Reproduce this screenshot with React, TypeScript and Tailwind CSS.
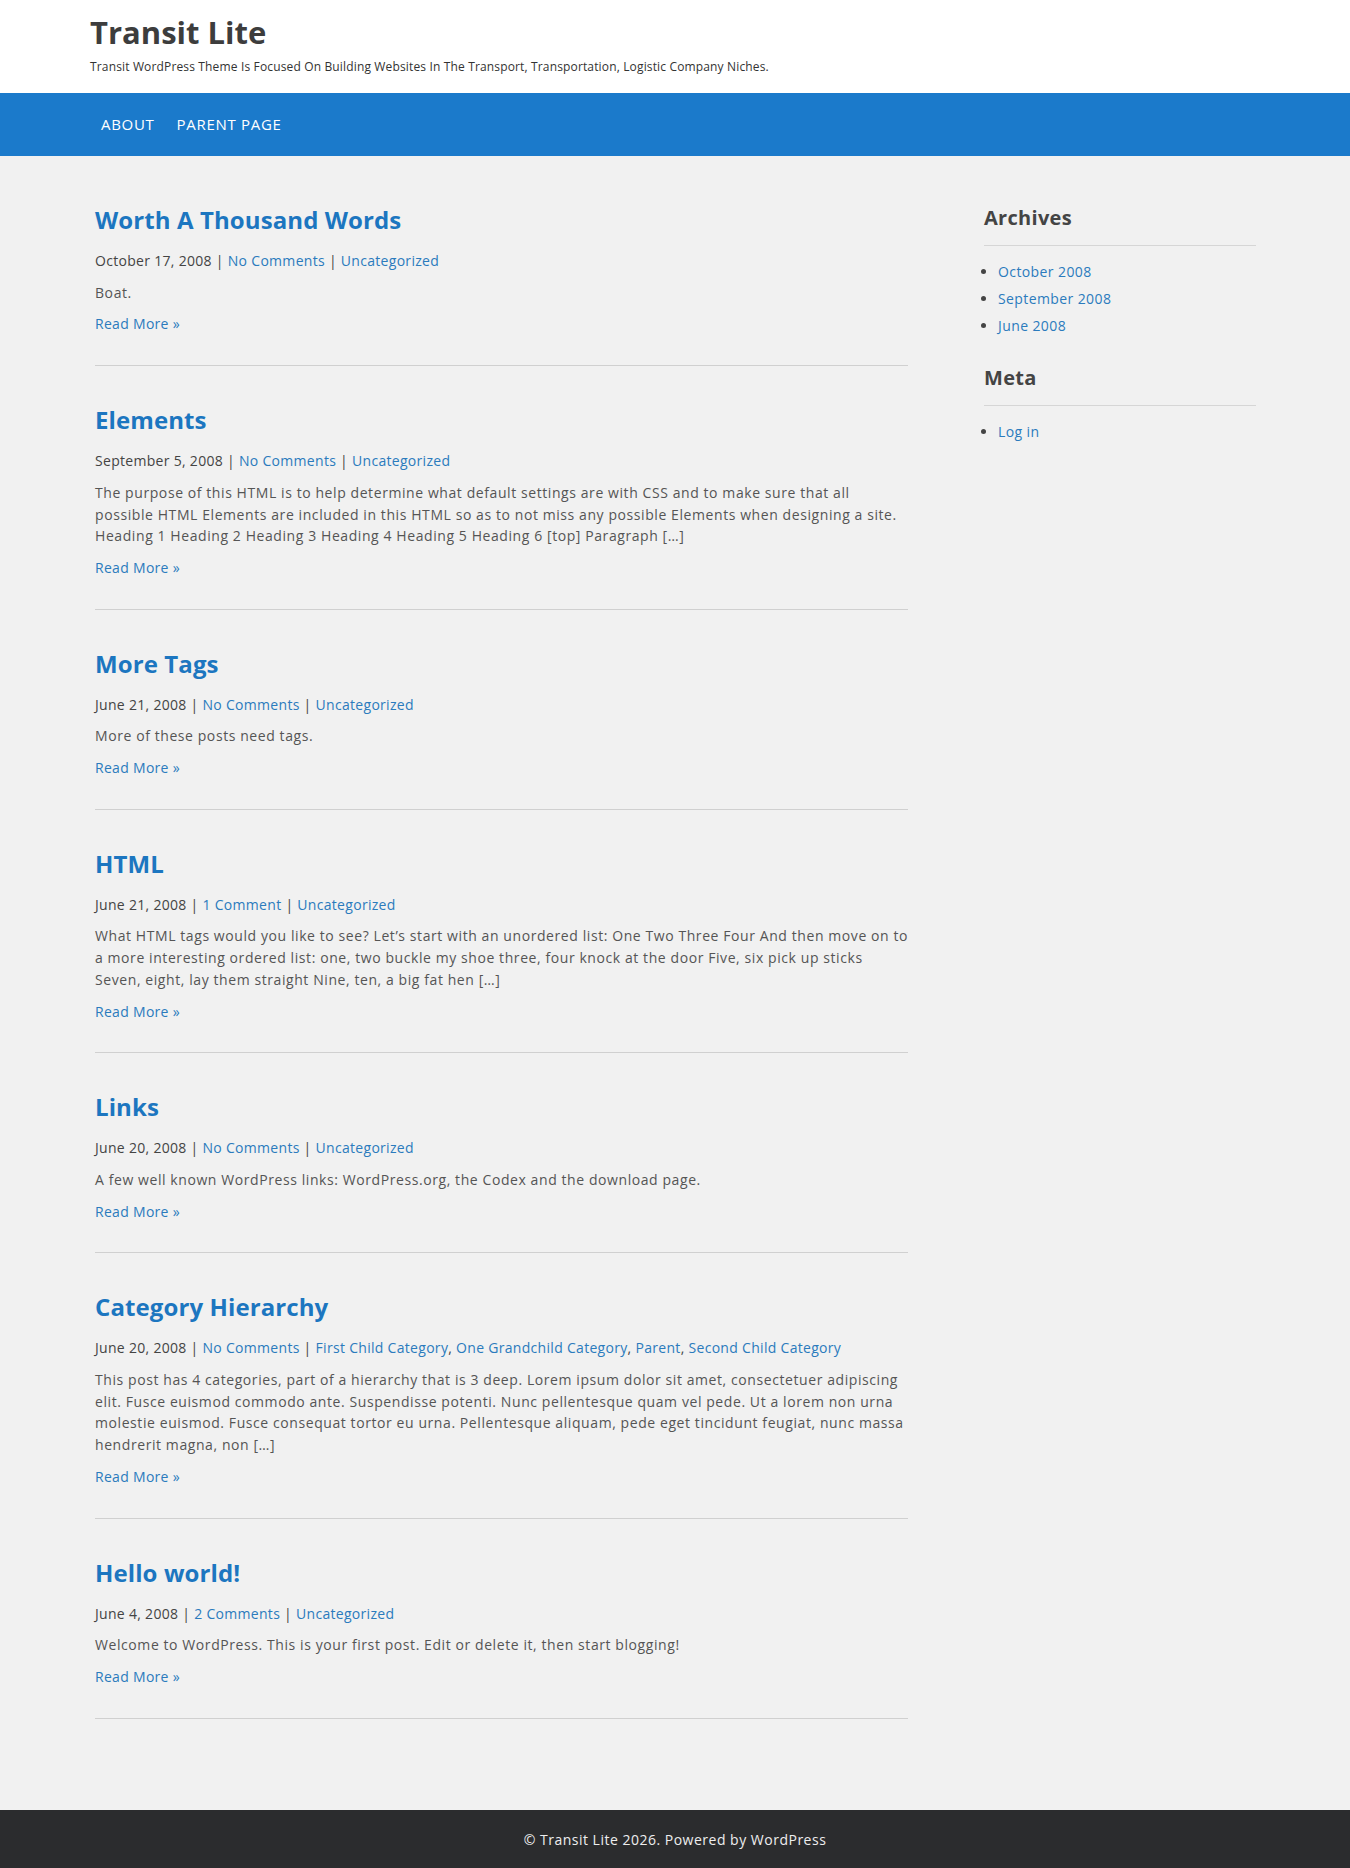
import React from "react";

type Link = { label: string };

interface Post {
  title: string;
  date: string;
  comments: string;
  categories: string[];
  excerpt: string;
}

const posts: Post[] = [
  {
    title: "Worth A Thousand Words",
    date: "October 17, 2008",
    comments: "No Comments",
    categories: ["Uncategorized"],
    excerpt: "Boat.",
  },
  {
    title: "Elements",
    date: "September 5, 2008",
    comments: "No Comments",
    categories: ["Uncategorized"],
    excerpt:
      "The purpose of this HTML is to help determine what default settings are with CSS and to make sure that all possible HTML Elements are included in this HTML so as to not miss any possible Elements when designing a site. Heading 1 Heading 2 Heading 3 Heading 4 Heading 5 Heading 6 [top] Paragraph […]",
  },
  {
    title: "More Tags",
    date: "June 21, 2008",
    comments: "No Comments",
    categories: ["Uncategorized"],
    excerpt: "More of these posts need tags.",
  },
  {
    title: "HTML",
    date: "June 21, 2008",
    comments: "1 Comment",
    categories: ["Uncategorized"],
    excerpt:
      "What HTML tags would you like to see? Let’s start with an unordered list: One Two Three Four And then move on to a more interesting ordered list: one, two buckle my shoe three, four knock at the door Five, six pick up sticks Seven, eight, lay them straight Nine, ten, a big fat hen […]",
  },
  {
    title: "Links",
    date: "June 20, 2008",
    comments: "No Comments",
    categories: ["Uncategorized"],
    excerpt: "A few well known WordPress links: WordPress.org, the Codex and the download page.",
  },
  {
    title: "Category Hierarchy",
    date: "June 20, 2008",
    comments: "No Comments",
    categories: ["First Child Category", "One Grandchild Category", "Parent", "Second Child Category"],
    excerpt:
      "This post has 4 categories, part of a hierarchy that is 3 deep. Lorem ipsum dolor sit amet, consectetuer adipiscing elit. Fusce euismod commodo ante. Suspendisse potenti. Nunc pellentesque quam vel pede. Ut a lorem non urna molestie euismod. Fusce consequat tortor eu urna. Pellentesque aliquam, pede eget tincidunt feugiat, nunc massa hendrerit magna, non […]",
  },
  {
    title: "Hello world!",
    date: "June 4, 2008",
    comments: "2 Comments",
    categories: ["Uncategorized"],
    excerpt: "Welcome to WordPress. This is your first post. Edit or delete it, then start blogging!",
  },
];

const archives: Link[] = [{ label: "October 2008" }, { label: "September 2008" }, { label: "June 2008" }];

function PostItem({ post }: { post: Post }) {
  return (
    <article>
      <h2 className="font-['Open_Sans',sans-serif] text-[24px] font-bold leading-[30px] tracking-[0.1px] text-[#1c76c0]">
        <a href="#">{post.title}</a>
      </h2>
      <div className="mt-[15px] text-[14px] leading-[21.7px] tracking-[0.3px] text-[#444]">
        {post.date} |{" "}
        <a href="#" className="text-[#2b7bbd]">
          {post.comments}
        </a>{" "}
        |{" "}
        {post.categories.map((c, i) => (
          <span key={c}>
            <a href="#" className="text-[#2b7bbd]">
              {c}
            </a>
            {i < post.categories.length - 1 ? ", " : ""}
          </span>
        ))}
      </div>
      <p className="mt-[10px] text-[14px] leading-[21.7px] tracking-[0.58px] text-[#555]">{post.excerpt}</p>
      <a href="#" className="mt-[10px] block text-[14px] leading-[21.7px] tracking-[0.3px] text-[#2b7bbd]">
        Read More »
      </a>
      <hr className="mt-[30px] mb-[39px] border-t border-[#d0d0d0]" />
    </article>
  );
}

function Widget({ title, items }: { title: string; items: Link[] }) {
  return (
    <section className="mb-[26px]">
      <h3 className="text-[20px] font-bold leading-[26px] tracking-[0.3px] text-[#444]">{title}</h3>
      <hr className="mt-[14px] border-t border-[#d6d6d6]" />
      <ul className="mt-[12px] list-disc pl-[14px] marker:text-[#444]">
        {items.map((it) => (
          <li key={it.label} className="text-[14px] leading-[27px] tracking-[0.4px]">
            <a href="#" className="text-[#2b7bbd]">
              {it.label}
            </a>
          </li>
        ))}
      </ul>
    </section>
  );
}

export default function App() {
  return (
    <div className="min-h-screen bg-[#f1f1f1] font-['Open_Sans',sans-serif]">
      {/* Header */}
      <header className="h-[93px] bg-white pl-[90px] pt-[12px]">
        <h1 className="text-[31px] font-bold leading-[40px] text-[#3d3d3d]">Transit Lite</h1>
        <p className="mt-[7px] text-[12px] leading-[16px] tracking-[0.15px] text-[#333]">
          Transit WordPress Theme Is Focused On Building Websites In The Transport, Transportation, Logistic Company Niches.
        </p>
      </header>

      {/* Nav */}
      <nav className="h-[63px] bg-[#1b7acb] pl-[90px]">
        <ul className="flex h-full items-center">
          <li>
            <a href="#" className="block px-[11px] text-[15px] uppercase tracking-[0.7px] text-white">
              About
            </a>
          </li>
          <li>
            <a href="#" className="block px-[11px] text-[15px] uppercase tracking-[0.7px] text-white">
              Parent Page
            </a>
          </li>
        </ul>
      </nav>

      {/* Main */}
      <main className="flex gap-[76px] pl-[95px] pt-[49px] pb-[52px]">
        <div className="w-[813px]">
          {posts.map((p) => (
            <PostItem key={p.title} post={p} />
          ))}
        </div>
        <aside className="w-[272px]">
          <Widget title="Archives" items={archives} />
          <Widget title="Meta" items={[{ label: "Log in" }]} />
        </aside>
      </main>

      {/* Footer */}
      <footer className="flex h-[58px] items-center justify-center bg-[#2b2c2e] pt-[2px] text-[14px] tracking-[0.5px] text-[#eee]">
        © Transit Lite 2026. Powered by WordPress
      </footer>
    </div>
  );
}
